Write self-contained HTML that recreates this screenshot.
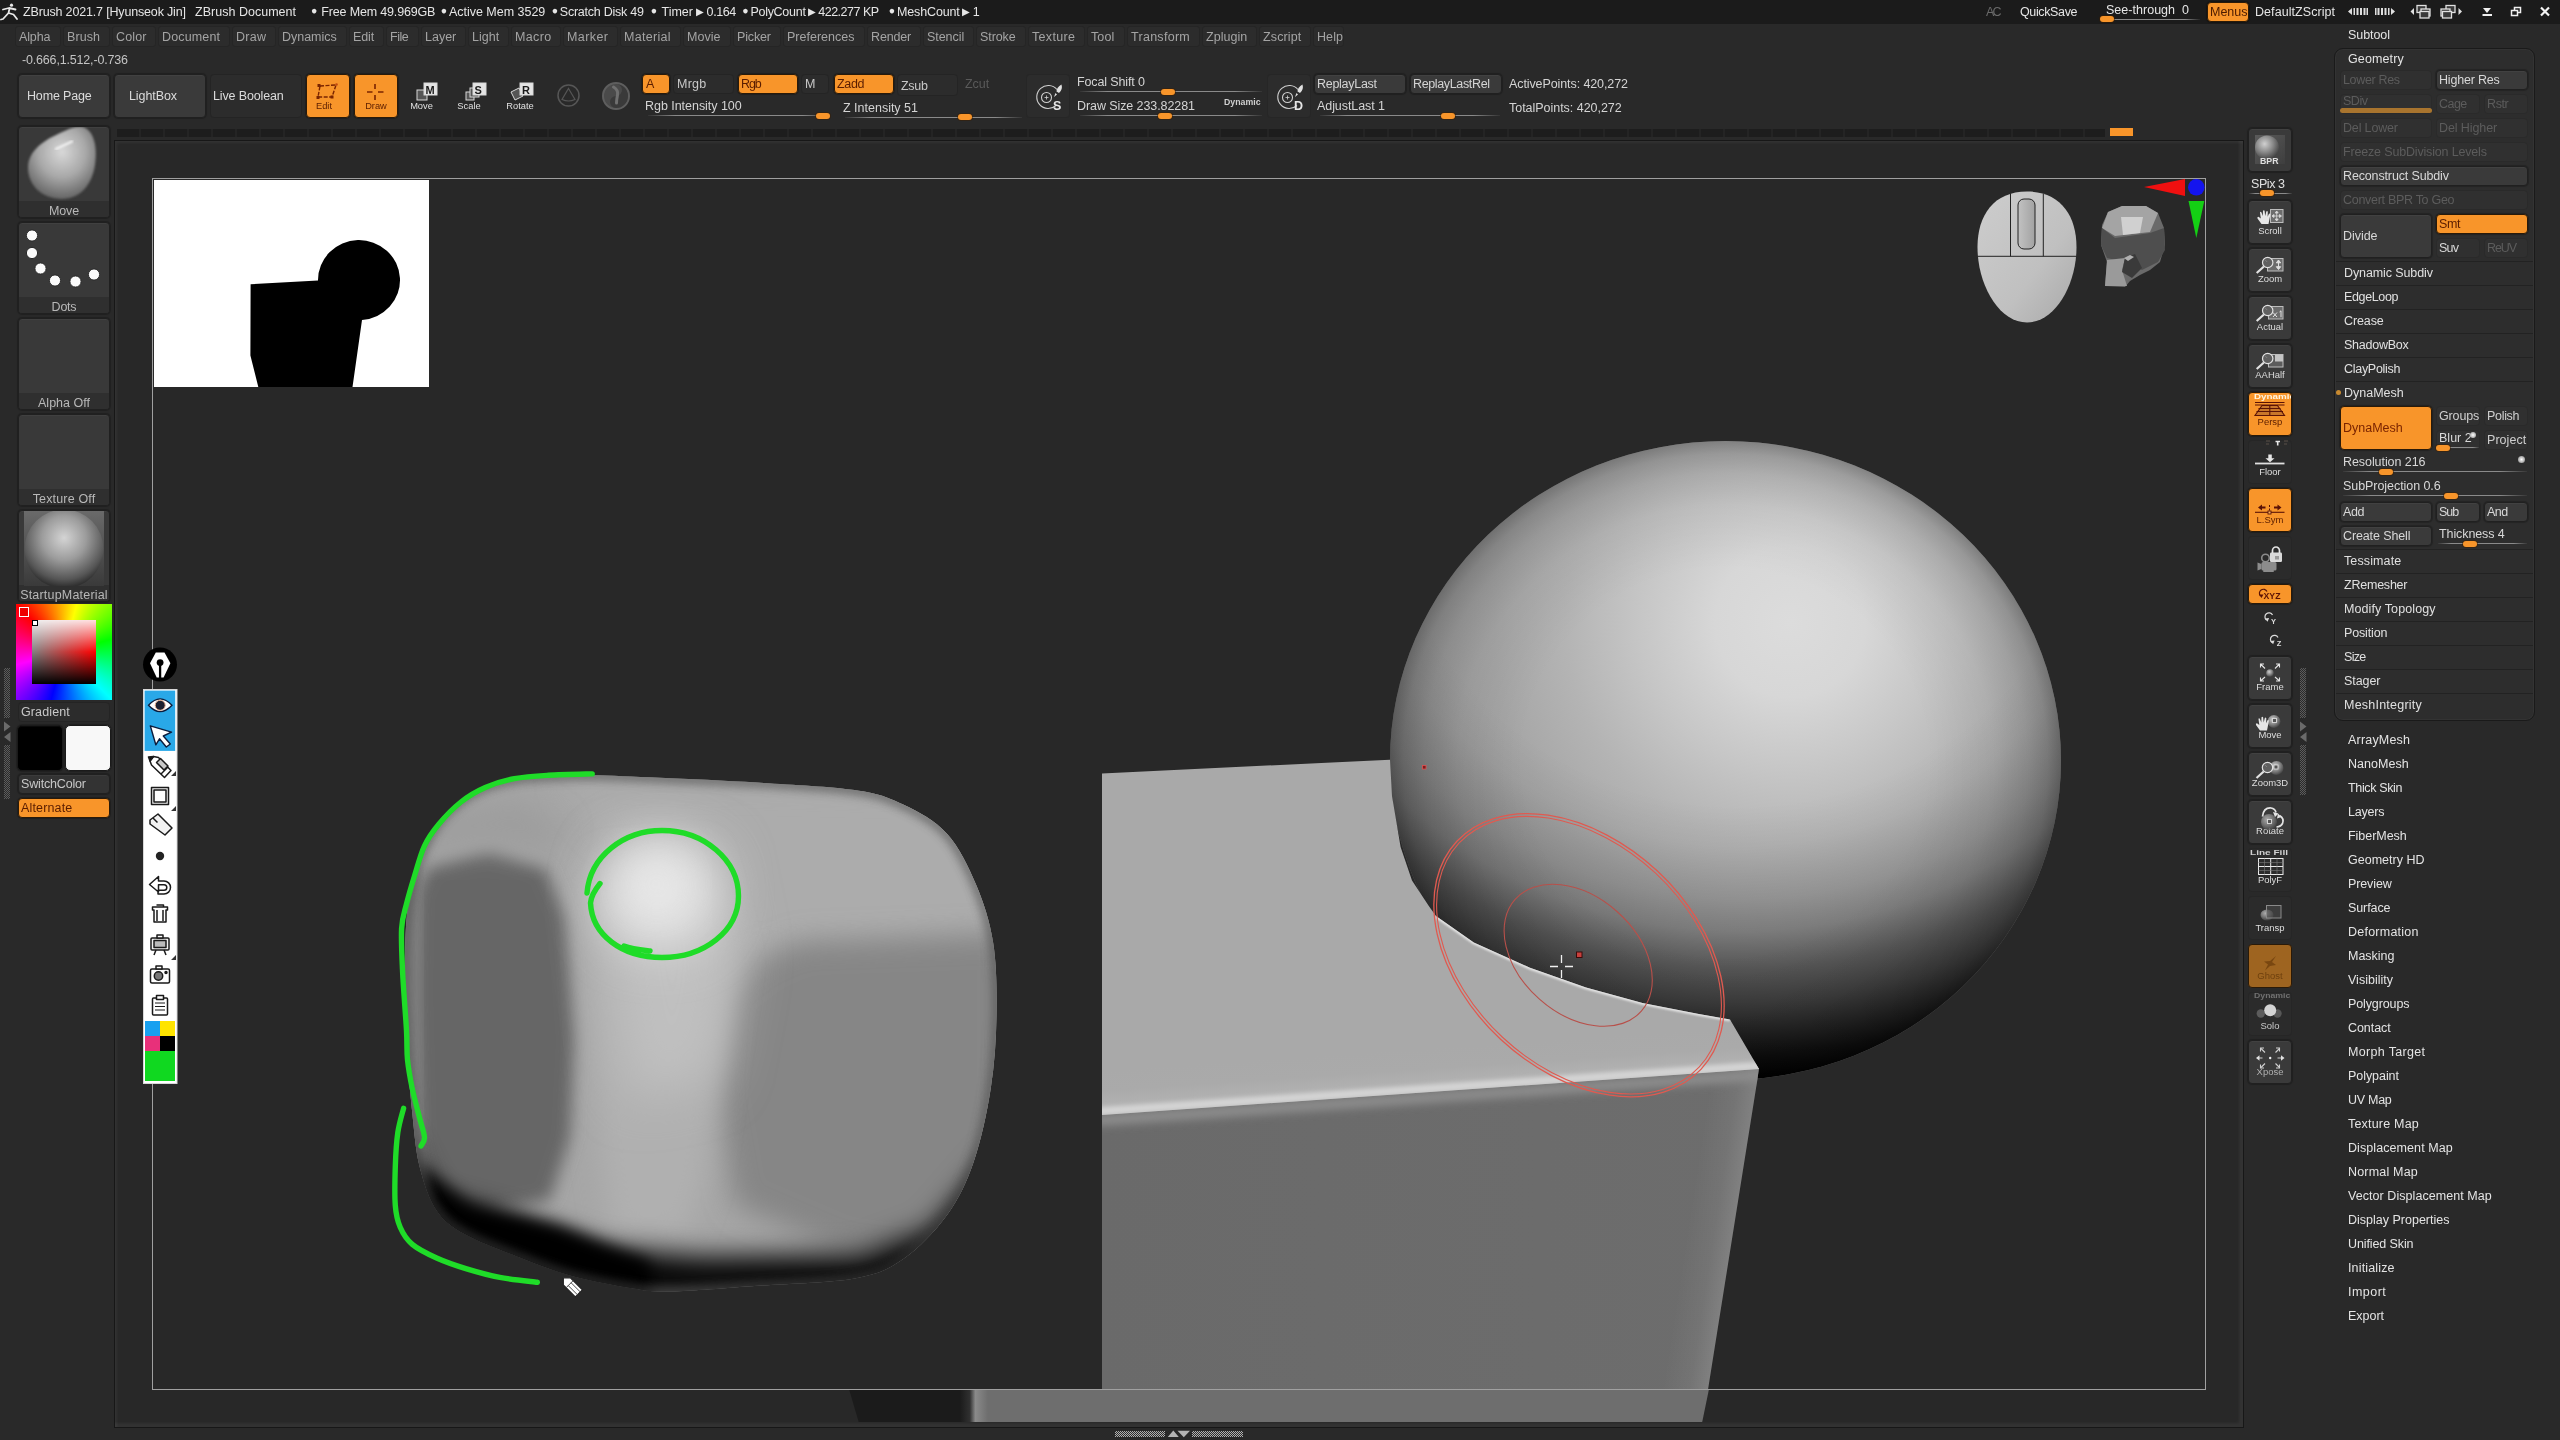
<!DOCTYPE html>
<html><head><meta charset="utf-8"><title>ZBrush</title><style>
*{box-sizing:border-box;margin:0;padding:0}
html,body{width:2560px;height:1440px;overflow:hidden;background:#292929}
body{position:relative;font-family:"Liberation Sans",sans-serif;font-size:12.5px;color:#d4d4d4}
div,svg{position:absolute}
.t{white-space:pre;line-height:16px;height:16px}
#ui{left:0;top:0;width:2560px;height:1440px;will-change:transform}
.b{background:#3a3a3a;border:1px solid #202020;border-radius:4px;box-shadow:inset 0 1px 0 rgba(255,255,255,.04),0 0 1px 1px rgba(0,0,0,.22)}
.bd{background:#2c2c2c;border:1px solid #242424;border-radius:4px}
.bo{background:#f8952a;border:1px solid #2a1a08;border-radius:4px;box-shadow:0 0 1px 1px rgba(0,0,0,.25)}
.bg{background:#9e6420;border:1px solid #2a1a08;border-radius:4px}
.bx{background:#303030;border:1px solid #2a2a2a;border-radius:4px}
.dot{font-size:8px;position:relative;top:-1px}
.tri{font-size:8.5px;position:relative;top:-1px;letter-spacing:0}
.mi{background:#2c2c2c;border:1px solid #252525;border-radius:3px}
.trk{height:1px;background:linear-gradient(90deg,rgba(150,150,150,.1),#8a8a8a 15%,#8a8a8a 85%,rgba(150,150,150,.1))}
.thumb{height:6px;background:#f8952a;border-radius:3px;box-shadow:0 0 0 1px rgba(60,30,0,.5)}
.sep{height:1px;background:#222;left:2336px;width:197px}
</style></head><body>
<div style="left:114px;top:140px;width:2130px;height:1288px;background:#282828;border:1px solid #171717;box-shadow:inset 2px 2px 3px rgba(255,255,255,.05),inset -4px -4px 3px rgba(255,255,255,.05)"></div>
<svg style="left:0;top:0" width="2560" height="1440" viewBox="0 0 2560 1440">
<defs>
<radialGradient id="sp1" gradientUnits="userSpaceOnUse" cx="1790" cy="622" r="500">
<stop offset="0" stop-color="#dcdcdc"/><stop offset="0.15" stop-color="#d7d7d7"/><stop offset="0.3" stop-color="#c6c6c6"/><stop offset="0.45" stop-color="#b4b4b4"/><stop offset="0.6" stop-color="#a6a6a6"/><stop offset="0.8" stop-color="#989898"/><stop offset="1" stop-color="#8e8e8e"/></radialGradient>
<radialGradient id="sp2" gradientUnits="userSpaceOnUse" cx="1739.5" cy="472" r="636.1" gradientTransform="translate(0 22.51) scale(1 .9523)">
<stop offset="0.55" stop-color="#000" stop-opacity="0"/><stop offset="0.6176" stop-color="#000" stop-opacity=".04"/><stop offset="0.7057" stop-color="#000" stop-opacity=".15"/><stop offset="0.758" stop-color="#000" stop-opacity=".25"/><stop offset="0.8217" stop-color="#000" stop-opacity=".47"/><stop offset="0.8766" stop-color="#000" stop-opacity=".62"/><stop offset="0.9072" stop-color="#000" stop-opacity=".72"/><stop offset="0.9604" stop-color="#000" stop-opacity=".9"/><stop offset="1" stop-color="#000" stop-opacity="1"/></radialGradient>
<radialGradient id="sp3" gradientUnits="userSpaceOnUse" cx="1725.5" cy="760.5" r="335.5" gradientTransform="translate(0 36.2) scale(1 .9523)">
<stop offset="0.6" stop-color="#000" stop-opacity="0"/><stop offset="0.8" stop-color="#000" stop-opacity=".05"/><stop offset="0.9" stop-color="#000" stop-opacity=".12"/><stop offset="0.96" stop-color="#000" stop-opacity=".2"/><stop offset="1" stop-color="#000" stop-opacity=".32"/></radialGradient>
<linearGradient id="bxtop" gradientUnits="userSpaceOnUse" x1="1427.3" y1="1048.6" x2="1430" y2="1088.5"><stop offset="0" stop-color="#a9a9a9"/><stop offset="0.5" stop-color="#aaa"/><stop offset="1" stop-color="#b4b4b4"/></linearGradient>
<linearGradient id="bxfr" gradientUnits="userSpaceOnUse" x1="1102" y1="0" x2="1760" y2="0"><stop offset="0" stop-color="#6a6a6a"/><stop offset="1" stop-color="#6d6d6d"/></linearGradient>
<linearGradient id="bxed" gradientUnits="userSpaceOnUse" x1="1685.5" y1="1238.1" x2="1730" y2="1245"><stop offset="0" stop-color="#fff" stop-opacity="0"/><stop offset="0.6" stop-color="#fff" stop-opacity=".05"/><stop offset="1" stop-color="#fff" stop-opacity=".13"/></linearGradient>
<linearGradient id="bxfr2" gradientUnits="userSpaceOnUse" x1="0" y1="1060" x2="0" y2="1400"><stop offset="0" stop-color="#fff" stop-opacity=".06"/><stop offset="1" stop-color="#000" stop-opacity=".05"/></linearGradient>
<filter id="e2" filterUnits="userSpaceOnUse" x="1050" y="880" width="760" height="280"><feGaussianBlur stdDeviation="2"/></filter>
<filter id="e4" filterUnits="userSpaceOnUse" x="1050" y="1020" width="760" height="160"><feGaussianBlur stdDeviation="4"/></filter>
<filter id="e1" filterUnits="userSpaceOnUse" x="1050" y="880" width="760" height="280"><feGaussianBlur stdDeviation="1.1"/></filter>
<filter id="b2" x="-10%" y="-10%" width="120%" height="120%"><feGaussianBlur stdDeviation="2"/></filter>
<filter id="b4" x="-10%" y="-10%" width="120%" height="120%"><feGaussianBlur stdDeviation="4"/></filter>
<filter id="b8" x="-20%" y="-20%" width="140%" height="140%"><feGaussianBlur stdDeviation="8"/></filter>
<filter id="b14" x="-30%" y="-30%" width="160%" height="160%"><feGaussianBlur stdDeviation="14"/></filter>
<filter id="b25" x="-50%" y="-50%" width="200%" height="200%"><feGaussianBlur stdDeviation="25"/></filter>
<clipPath id="cblob"><path d="M592 775.3C573.3 775.1 561 775.8 548 776.5C535 777.2 525.3 777.4 514 779.5C502.7 781.6 491.7 783.5 480.4 789C469.1 794.5 455.7 803.3 446.4 812.8C437.1 822.3 430.6 832.2 424.5 845.8C418.4 859.4 413.1 876.6 409.9 894.4C406.6 912.2 405.6 928.4 405 952.7C404.4 977 405.3 1013.3 406.5 1040C407.7 1066.7 410.1 1091.9 412.3 1113C414.5 1134.1 415.6 1150.4 419.6 1166.6C423.7 1182.8 428.9 1199 436.6 1210.3C444.3 1221.6 451.2 1226.5 465.8 1234.6C480.4 1242.7 506.3 1252.1 524.1 1259C541.9 1265.9 554.9 1271.2 572.7 1276C590.5 1280.8 614.8 1285.4 631 1288C647.2 1290.6 648.9 1291.9 670 1291.5C691.1 1291.1 726.6 1287.9 757.4 1285.7C788.2 1283.5 830.3 1282.9 854.6 1278.4C878.9 1274 887.8 1269.6 903.2 1259C918.6 1248.4 935.2 1231.2 947 1215C958.8 1198.8 966.4 1182.7 973.7 1161.7C981 1140.7 986.9 1113.1 990.7 1088.8C994.5 1064.5 996.1 1040.3 996.5 1016C996.9 991.7 996.6 964.9 993.2 943C989.8 921.1 983.8 902.9 976.1 884.7C968.4 866.5 959.1 847.1 947 833.7C934.9 820.3 918.6 811.8 903.2 804.5C887.8 797.2 878.9 793.6 854.6 790C830.3 786.4 789.8 784.6 757.4 782.6C725 780.6 687.8 779 660.2 777.8C632.6 776.6 610.7 775.5 592 775.3Z"/></clipPath>
<clipPath id="cov"><rect x="153" y="179" width="2052" height="1210"/></clipPath>
<clipPath id="cund"><rect x="116" y="1390" width="2126" height="32"/></clipPath>
<clipPath id="ctop"><path d="M1102 773.5 L1390 759.7 L1392 796 L1400.6 847 L1412 880.6 L1428.8 906 L1436 916 L1473.8 942.5 L1530 967.8 L1586 987.5 L1642.5 1003 L1698.8 1014 L1730 1019.5 L1759 1069 L1102 1115Z"/></clipPath>
</defs>
<g clip-path="url(#cund)"><path d="M849 1389 L859 1423 L980 1423 L980 1389Z" fill="#1b1b1b"/><path d="M972 1389 H1709 L1702 1423 H972Z" fill="#6e6e6e"/><rect x="960" y="1389" width="28" height="34" fill="url(#edgeg)"/></g>
<defs><linearGradient id="edgeg" x1="0" x2="1"><stop offset="0" stop-color="#1b1b1b"/><stop offset="0.35" stop-color="#303030"/><stop offset="0.55" stop-color="#8a8a8a"/><stop offset="1" stop-color="#6e6e6e"/></linearGradient></defs>
<g clip-path="url(#cov)">
<ellipse cx="1725.5" cy="760.5" rx="335.5" ry="319.5" fill="url(#sp1)"/>
<ellipse cx="1725.5" cy="760.5" rx="335.5" ry="319.5" fill="url(#sp2)"/>
<ellipse cx="1725.5" cy="760.5" rx="335.5" ry="319.5" fill="url(#sp3)"/>
<path d="M1102 1113 L1759 1068 L1757 1082 L1703 1421 L1703 1440 L1102 1440Z" fill="url(#bxfr)"/>
<clipPath id="cfr"><path d="M1102 1113 L1759 1068 L1757 1082 L1703 1421 L1703 1440 L1102 1440Z"/></clipPath><g clip-path="url(#cfr)"><rect x="1600" y="1060" width="170" height="380" fill="url(#bxed)"/><path d="M1095 1120.5 L1765 1074.5" stroke="#8e8e8e" stroke-width="11" filter="url(#e4)" fill="none"/></g>
<g clip-path="url(#ctop)"><rect x="1100" y="750" width="670" height="370" fill="url(#bxtop)"/>
<path d="M1095 1111.5 L1765 1065.5" stroke="#d4d4d4" stroke-width="8" filter="url(#e2)" fill="none"/>
<path d="M1436 916 L1473.8 942.5 L1530 967.8 L1586 987.5 L1642.5 1003 L1698.8 1014 L1730 1019.5" stroke="#ececec" stroke-width="3.5" fill="none" filter="url(#e1)" opacity=".95"/>
</g>
<path d="M592 775.3C573.3 775.1 561 775.8 548 776.5C535 777.2 525.3 777.4 514 779.5C502.7 781.6 491.7 783.5 480.4 789C469.1 794.5 455.7 803.3 446.4 812.8C437.1 822.3 430.6 832.2 424.5 845.8C418.4 859.4 413.1 876.6 409.9 894.4C406.6 912.2 405.6 928.4 405 952.7C404.4 977 405.3 1013.3 406.5 1040C407.7 1066.7 410.1 1091.9 412.3 1113C414.5 1134.1 415.6 1150.4 419.6 1166.6C423.7 1182.8 428.9 1199 436.6 1210.3C444.3 1221.6 451.2 1226.5 465.8 1234.6C480.4 1242.7 506.3 1252.1 524.1 1259C541.9 1265.9 554.9 1271.2 572.7 1276C590.5 1280.8 614.8 1285.4 631 1288C647.2 1290.6 648.9 1291.9 670 1291.5C691.1 1291.1 726.6 1287.9 757.4 1285.7C788.2 1283.5 830.3 1282.9 854.6 1278.4C878.9 1274 887.8 1269.6 903.2 1259C918.6 1248.4 935.2 1231.2 947 1215C958.8 1198.8 966.4 1182.7 973.7 1161.7C981 1140.7 986.9 1113.1 990.7 1088.8C994.5 1064.5 996.1 1040.3 996.5 1016C996.9 991.7 996.6 964.9 993.2 943C989.8 921.1 983.8 902.9 976.1 884.7C968.4 866.5 959.1 847.1 947 833.7C934.9 820.3 918.6 811.8 903.2 804.5C887.8 797.2 878.9 793.6 854.6 790C830.3 786.4 789.8 784.6 757.4 782.6C725 780.6 687.8 779 660.2 777.8C632.6 776.6 610.7 775.5 592 775.3Z" fill="#a6a6a6"/>
<g clip-path="url(#cblob)">
<path d="M560 780 L990 790 L1000 935 L730 955 L700 900 L600 830Z" fill="#acacac" filter="url(#b14)"/>
<path d="M722 990 L760 960 L800 942 L1010 935 L1010 1200 L920 1260 L840 1250 L735 1205 L715 1090Z" fill="#868686" filter="url(#b14)"/>
<path d="M428 866 L490 850 L545 868 L566 918 L575 1040 L570 1137 L550 1200 L466 1215 L432 1190 L418 1140 L414 990 L416 894Z" fill="#666" filter="url(#b8)"/>
<path d="M400 880 L420 870 L420 1180 L400 1180Z" fill="#7c7c7c" filter="url(#b8)"/>
<path d="M420 815 L520 795 L565 828 L548 856 L480 845 L415 860Z" fill="#9e9e9e" filter="url(#b14)"/>
<path d="M590 900 L602 860 L705 850 L735 960 L718 1080 L705 1180 L685 1235 L612 1235 L600 1150 L594 1040Z" fill="#b0b0b0" filter="url(#b14)"/>
<path d="M598 900 L615 850 L715 850 L738 960 L715 1080 L630 1100Z" fill="#c0c0c0" filter="url(#b25)"/>
<ellipse cx="660" cy="892" rx="58" ry="56" fill="#e4e4e4" filter="url(#b25)"/>
<ellipse cx="656" cy="884" rx="28" ry="28" fill="#eee" filter="url(#b25)" opacity=".6"/>
<path d="M400 1128 L436 1198 L520 1220 L600 1248 L700 1257 L860 1255 L930 1230 L1000 1150 L1010 1300 L400 1300Z" fill="#000" filter="url(#b14)"/>
<path d="M420 1165 L470 1204 L560 1226 L650 1262 L650 1300 L420 1300Z" fill="#000" filter="url(#b8)"/>
<path d="M592 775.3C573.3 775.1 561 775.8 548 776.5C535 777.2 525.3 777.4 514 779.5C502.7 781.6 491.7 783.5 480.4 789C469.1 794.5 455.7 803.3 446.4 812.8C437.1 822.3 430.6 832.2 424.5 845.8C418.4 859.4 413.1 876.6 409.9 894.4C406.6 912.2 405.6 928.4 405 952.7C404.4 977 405.3 1013.3 406.5 1040C407.7 1066.7 410.1 1091.9 412.3 1113C414.5 1134.1 415.6 1150.4 419.6 1166.6C423.7 1182.8 428.9 1199 436.6 1210.3C444.3 1221.6 451.2 1226.5 465.8 1234.6C480.4 1242.7 506.3 1252.1 524.1 1259C541.9 1265.9 554.9 1271.2 572.7 1276C590.5 1280.8 614.8 1285.4 631 1288C647.2 1290.6 648.9 1291.9 670 1291.5C691.1 1291.1 726.6 1287.9 757.4 1285.7C788.2 1283.5 830.3 1282.9 854.6 1278.4C878.9 1274 887.8 1269.6 903.2 1259C918.6 1248.4 935.2 1231.2 947 1215C958.8 1198.8 966.4 1182.7 973.7 1161.7C981 1140.7 986.9 1113.1 990.7 1088.8C994.5 1064.5 996.1 1040.3 996.5 1016C996.9 991.7 996.6 964.9 993.2 943C989.8 921.1 983.8 902.9 976.1 884.7C968.4 866.5 959.1 847.1 947 833.7C934.9 820.3 918.6 811.8 903.2 804.5C887.8 797.2 878.9 793.6 854.6 790C830.3 786.4 789.8 784.6 757.4 782.6C725 780.6 687.8 779 660.2 777.8C632.6 776.6 610.7 775.5 592 775.3Z" fill="none" stroke="#444" stroke-width="10" filter="url(#b4)" opacity=".55"/>
</g>
<g fill="none" stroke="#1fdc28" stroke-width="5.4" stroke-linecap="round" stroke-linejoin="round"><path d="M592.2 773.9C584.9 774.1 561.4 774.5 548.4 775.3C535.4 776.1 524.9 776.7 514.4 778.7C503.9 780.7 494.2 783.6 485.3 787.5C476.4 791.4 468.7 795.9 461 802C453.3 808.1 445.1 816.7 439 824C432.9 831.3 428.5 837.3 424.5 845.8C420.5 854.3 417.8 865.3 414.8 875C411.8 884.7 408.7 895.1 406.5 904C404.3 912.9 402.2 917 401.6 928.4C401 939.8 401.8 955.2 402.6 972.2C403.4 989.2 405.7 1015.9 406.5 1030.5C407.3 1045.1 406.5 1050 407.5 1059.7C408.5 1069.4 410.3 1079.1 412.3 1088.8C414.3 1098.5 417.6 1109.9 419.6 1118C421.6 1126.1 424.3 1132.7 424.5 1137.4C424.7 1142.1 421.6 1144.6 421 1146"/><path d="M403.6 1108.3C402.6 1112.3 399.2 1122.9 397.8 1132.6C396.4 1142.3 395.7 1154.4 395.3 1166.6C394.9 1178.8 394.5 1195.4 395.3 1205.5C396.1 1215.6 397.4 1220.8 400.2 1227.3C403 1233.8 406.2 1239.3 412.3 1244.4C418.4 1249.5 427.7 1254 436.6 1258C445.5 1262 455.3 1265.4 465.8 1268.6C476.3 1271.8 487.9 1275.1 499.8 1277.4C511.7 1279.7 531 1281.5 537.3 1282.3"/>
<path d="M600 883.5 C594 891 591 897 590.5 903 C592 935 622 957.5 662 957.5 C704 957.5 738.5 931 738.5 896 C738.5 860 704 830.5 662 830.5 C624 830.5 590 856 587 893 M624 946 C632 949 642 950 650 951"/></g>
<g transform="translate(572.5 1287) rotate(-45)"><path d="M-5 -8 L0 -13 L5 -8 L5 9 L-5 9Z" fill="#fff" stroke="#222" stroke-width="1.2"/><path d="M-5 -4h10M-2 -4v13M2 -4v13" stroke="#444" stroke-width=".9" fill="none"/></g>
<g fill="none" transform="translate(1579 955.2) rotate(43)"><ellipse rx="167" ry="115" stroke="#e05a50" stroke-width="1.3"/><ellipse rx="164.2" ry="112.2" stroke="#e05a50" stroke-width="1.1"/></g>
<g fill="none" transform="translate(1578.2 955.3) rotate(41.5)"><ellipse rx="84.3" ry="58.5" stroke="#b8504a" stroke-width="1.1"/></g>
<rect x="1576.5" y="952" width="5.5" height="5.5" fill="#c8403c" stroke="#3a0a0a" stroke-width="1"/>
<rect x="1422.5" y="765.5" width="3.5" height="3.5" fill="#7a2020" stroke="#e05050" stroke-width=".8"/>
<path d="M1561.5 955v8M1561.5 970v8M1550 966.5h8M1565 966.5h8" stroke="#f0f0f0" stroke-width="1.3"/>
<rect x="154" y="180" width="275" height="207" fill="#fff"/>
<path d="M250.6 284.2 L318 280.4 A41 40 0 1 1 362 320 L352.5 387 L258.3 387 L250.4 355.4Z" fill="#000"/>
<defs><linearGradient id="mo" x1="0" y1="0" x2="1" y2="1"><stop offset="0" stop-color="#cdcdcd"/><stop offset="0.6" stop-color="#c0c0c0"/><stop offset="1" stop-color="#a8a8a8"/></linearGradient><linearGradient id="wh" x1="0" x2="1"><stop offset="0" stop-color="#c2c2c2"/><stop offset="1" stop-color="#a2a2a2"/></linearGradient></defs>
<path d="M2027 191.5 C2060 191.5 2076.5 215 2076.5 247 C2076.5 285 2055 322.5 2027 322.5 C1999 322.5 1977.5 285 1977.5 247 C1977.5 215 1994 191.5 2027 191.5Z" fill="url(#mo)"/>
<path d="M1978 256.3H2076M2010.5 193.5V256.3M2043.3 193.5V256.3" stroke="#222" stroke-width="1" fill="none"/>
<rect x="2018" y="199" width="17" height="50" rx="6" fill="url(#wh)" stroke="#222" stroke-width="1"/>
<g><path d="M2102 225 L2108 212 L2122 206 L2146 206 L2158 213 L2164 228 L2165 245 L2160 262 L2150 270 L2140 275 L2130 281 L2125 287 L2105 286 L2107 262 L2101 245Z" fill="#6a6a6a"/>
<path d="M2108 212 L2122 206 L2146 206 L2158 213 L2150 232 L2115 236 L2102 228Z" fill="#a4a4a4"/><path d="M2121 217 L2143 217 L2140 233 L2123 235Z" fill="#d0d0d0"/>
<path d="M2102 228 L2115 238 L2150 233 L2164 228 L2165 250 L2158 262 L2142 270 L2125 262 L2107 258 L2101 245Z" fill="#4e4e4e"/>
<path d="M2107 260 L2125 258 L2122 270 L2127 286 L2105 286Z" fill="#9a9a9a"/><path d="M2125 258 L2135 254 L2142 268 L2132 278 L2122 272Z" fill="#3a3a3a"/><path d="M2124 258 l6 -3 4 2 -6 4z" fill="#b0b0b0"/></g>
<path d="M2144 187 L2185 179 L2185 196Z" fill="#f01010"/><circle cx="2196.3" cy="187.3" r="8.3" fill="#1414ee"/><path d="M2188.5 201 L2204.3 201 L2196.3 238Z" fill="#14d014"/>
</g>
<rect x="152.5" y="178.5" width="2053" height="1211" fill="none" stroke="#a0a0a0" stroke-width="1"/>
</svg>
<div style="left:1115px;top:1431px;width:50px;height:6px;background:conic-gradient(#b0b0b0 25%,#2c2c2c 0 50%,#b0b0b0 0 75%,#2c2c2c 0) 0 0/2px 2px"></div>
<div style="left:1192px;top:1431px;width:51px;height:6px;background:conic-gradient(#b0b0b0 25%,#2c2c2c 0 50%,#b0b0b0 0 75%,#2c2c2c 0) 0 0/2px 2px"></div>
<svg style="left:1166px;top:1429px" width="26" height="10"><path d="M1.8 8l5.5-6.5 5.5 6.5zM11.5 1.8h12.5l-6.2 6.5z" fill="#b4b4b4"/></svg>
<div id="ui"><div style="left:0;top:0;width:2560px;height:24px;background:#1b1b1b"></div>
<svg style="left:0;top:2px" width="20" height="20" viewBox="0 0 20 20"><g fill="none" stroke="#e8e8e8" stroke-width="1.8" stroke-linecap="round" stroke-linejoin="round"><circle cx="11.5" cy="3.2" r="1.6" fill="#e8e8e8" stroke="none"/><path d="M3 7.5 L9 6 L15.5 7.5 M9.5 6.5 L8.5 11 L3 17 L1 17.5 M8.5 11 L13.5 12.5 L17 17"/></g></svg>
<div class="t " style="left:23px;top:3.67px;color:#e6e6e6;letter-spacing:-0.165px;">ZBrush 2021.7 [Hyunseok Jin]</div>
<div class="t " style="left:195px;top:3.67px;color:#e6e6e6;letter-spacing:0.019px;">ZBrush Document</div>
<div class="t " style="left:321.3px;top:3.67px;color:#e6e6e6;letter-spacing:-0.164px;">Free Mem 49.969GB</div>
<div class="t " style="left:449px;top:3.67px;color:#e6e6e6;letter-spacing:-0.02px;">Active Mem 3529</div>
<div class="t " style="left:559.8px;top:3.67px;color:#e6e6e6;letter-spacing:-0.238px;">Scratch Disk 49</div>
<div class="t " style="left:661.5px;top:3.67px;color:#e6e6e6;letter-spacing:0.004px;">Timer</div>
<div class="t " style="left:706.6px;top:3.67px;color:#e6e6e6;letter-spacing:-0.42px;">0.164</div>
<div class="t " style="left:750.4px;top:3.67px;color:#e6e6e6;letter-spacing:-0.273px;">PolyCount</div>
<div class="t " style="left:818.2px;top:3.67px;color:#e6e6e6;letter-spacing:-0.483px;">422.277 KP</div>
<div class="t " style="left:897px;top:3.67px;color:#e6e6e6;letter-spacing:-0.142px;">MeshCount</div>
<div class="t " style="left:972.7px;top:3.67px;color:#e6e6e6;">1</div>
<div class="t " style="left:311.1px;top:2.46px;color:#e6e6e6;font-size:10.5px;">●</div>
<div class="t " style="left:440.8px;top:2.46px;color:#e6e6e6;font-size:10.5px;">●</div>
<div class="t " style="left:551.8px;top:2.46px;color:#e6e6e6;font-size:10.5px;">●</div>
<div class="t " style="left:650.8px;top:2.46px;color:#e6e6e6;font-size:10.5px;">●</div>
<div class="t " style="left:742.3px;top:2.46px;color:#e6e6e6;font-size:10.5px;">●</div>
<div class="t " style="left:888.8px;top:2.46px;color:#e6e6e6;font-size:10.5px;">●</div>
<div class="t " style="left:695.7px;top:3.63px;color:#e6e6e6;font-size:10px;">▶</div>
<div class="t " style="left:807.8px;top:3.63px;color:#e6e6e6;font-size:10px;">▶</div>
<div class="t " style="left:962.2px;top:3.63px;color:#e6e6e6;font-size:10px;">▶</div>
<div class="t " style="left:1986px;top:3.67px;color:#6a6a6a;letter-spacing:-1.875px;">AC</div>
<div class="t " style="left:2020px;top:3.67px;color:#e6e6e6;letter-spacing:-0.369px;">QuickSave</div>
<div class="t " style="left:2106px;top:1.67px;color:#e6e6e6;letter-spacing:0.023px;">See-through  0</div>
<div class="trk" style="left:2100px;top:18.5px;width:100px"></div><div class="thumb" style="left:2100px;top:16px;width:14px"></div>
<div class="bo" style="left:2207px;top:2px;width:42px;height:20px;"></div>
<div class="t " style="left:2210px;top:3.67px;color:#4a1a00;letter-spacing:-0.008px;">Menus</div>
<div class="t " style="left:2255px;top:3.67px;color:#e6e6e6;letter-spacing:0.061px;">DefaultZScript</div>
<svg style="left:2340px;top:0" width="220" height="24" viewBox="2340 0 220 24"><g fill="#e0e0e0">
<path d="M2348 11.5 l4 -3.5 v7z"/><rect x="2353.5" y="8" width="1.5" height="7"/><rect x="2356.5" y="8" width="2" height="7"/><rect x="2360" y="8" width="2" height="7"/><rect x="2363.5" y="8" width="2" height="7"/><rect x="2366.5" y="8" width="1.5" height="7"/>
<rect x="2375" y="8" width="1.5" height="7"/><rect x="2377.5" y="8" width="2" height="7"/><rect x="2381" y="8" width="2" height="7"/><rect x="2384.5" y="8" width="2" height="7"/><rect x="2388" y="8" width="1.5" height="7"/><path d="M2395 11.5 l-4 -3.5 v7z"/>
<path d="M2410.5 11.5 l3.5 -3.5 v7z"/><path d="M2462 11.5 l-3.5 -3.5 v7z"/>
</g><g fill="#3a3a3a" stroke="#e0e0e0" stroke-width="1.3">
<rect x="2417" y="5.5" width="9" height="7"/><rect x="2421" y="9" width="9" height="7"/><rect x="2420" y="11.5" width="9" height="6.5"/>
<rect x="2446" y="5.5" width="9" height="7"/><rect x="2441" y="9" width="9" height="7"/><rect x="2442.5" y="11.5" width="9" height="6.5"/>
</g><g fill="#f0f0f0"><path d="M2483 8h8l-4 5z"/><rect x="2482.5" y="14" width="9.5" height="2"/></g>
<g fill="none" stroke="#f0f0f0" stroke-width="1.5"><rect x="2514.5" y="7.5" width="6" height="5"/><rect x="2511.5" y="10.5" width="6" height="5" fill="#1b1b1b"/></g>
<path d="M2541 7.5l8 8M2549 7.5l-8 8" stroke="#f4f4f4" stroke-width="2.2"/></svg>
<div class="mi" style="left:15px;top:26px;width:46px;height:21px;"></div>
<div class="t m" style="left:19px;top:28.67px;color:#a4a4a4;letter-spacing:-0.121px;">Alpha</div>
<div class="mi" style="left:63px;top:26px;width:47px;height:21px;"></div>
<div class="t m" style="left:67px;top:28.67px;color:#a4a4a4;letter-spacing:0.086px;">Brush</div>
<div class="mi" style="left:112px;top:26px;width:44px;height:21px;"></div>
<div class="t m" style="left:116px;top:28.67px;color:#a4a4a4;letter-spacing:0.156px;">Color</div>
<div class="mi" style="left:158px;top:26px;width:72px;height:21px;"></div>
<div class="t m" style="left:162px;top:28.67px;color:#a4a4a4;letter-spacing:0.145px;">Document</div>
<div class="mi" style="left:232px;top:26px;width:44px;height:21px;"></div>
<div class="t m" style="left:236px;top:28.67px;color:#a4a4a4;letter-spacing:0.276px;">Draw</div>
<div class="mi" style="left:278px;top:26px;width:69px;height:21px;"></div>
<div class="t m" style="left:282px;top:28.67px;color:#a4a4a4;letter-spacing:-0.018px;">Dynamics</div>
<div class="mi" style="left:349px;top:26px;width:35px;height:21px;"></div>
<div class="t m" style="left:353px;top:28.67px;color:#a4a4a4;letter-spacing:-0.099px;">Edit</div>
<div class="mi" style="left:386px;top:26px;width:33px;height:21px;"></div>
<div class="t m" style="left:390px;top:28.67px;color:#a4a4a4;letter-spacing:-0.469px;">File</div>
<div class="mi" style="left:421px;top:26px;width:45px;height:21px;"></div>
<div class="t m" style="left:425px;top:28.67px;color:#a4a4a4;letter-spacing:-0.008px;">Layer</div>
<div class="mi" style="left:468px;top:26px;width:41px;height:21px;"></div>
<div class="t m" style="left:472px;top:28.67px;color:#a4a4a4;letter-spacing:0.035px;">Light</div>
<div class="mi" style="left:511px;top:26px;width:50px;height:21px;"></div>
<div class="t m" style="left:515px;top:28.67px;color:#a4a4a4;letter-spacing:0.379px;">Macro</div>
<div class="mi" style="left:563px;top:26px;width:55px;height:21px;"></div>
<div class="t m" style="left:567px;top:28.67px;color:#a4a4a4;letter-spacing:0.419px;">Marker</div>
<div class="mi" style="left:620px;top:26px;width:61px;height:21px;"></div>
<div class="t m" style="left:624px;top:28.67px;color:#a4a4a4;letter-spacing:0.29px;">Material</div>
<div class="mi" style="left:683px;top:26px;width:48px;height:21px;"></div>
<div class="t m" style="left:687px;top:28.67px;color:#a4a4a4;letter-spacing:0.039px;">Movie</div>
<div class="mi" style="left:733px;top:26px;width:48px;height:21px;"></div>
<div class="t m" style="left:737px;top:28.67px;color:#a4a4a4;letter-spacing:-0.147px;">Picker</div>
<div class="mi" style="left:783px;top:26px;width:82px;height:21px;"></div>
<div class="t m" style="left:787px;top:28.67px;color:#a4a4a4;letter-spacing:0.009px;">Preferences</div>
<div class="mi" style="left:867px;top:26px;width:54px;height:21px;"></div>
<div class="t m" style="left:871px;top:28.67px;color:#a4a4a4;letter-spacing:-0.15px;">Render</div>
<div class="mi" style="left:923px;top:26px;width:51px;height:21px;"></div>
<div class="t m" style="left:927px;top:28.67px;color:#a4a4a4;letter-spacing:-0.047px;">Stencil</div>
<div class="mi" style="left:976px;top:26px;width:50px;height:21px;"></div>
<div class="t m" style="left:980px;top:28.67px;color:#a4a4a4;letter-spacing:-0.078px;">Stroke</div>
<div class="mi" style="left:1028px;top:26px;width:57px;height:21px;"></div>
<div class="t m" style="left:1032px;top:28.67px;color:#a4a4a4;letter-spacing:0.333px;">Texture</div>
<div class="mi" style="left:1087px;top:26px;width:38px;height:21px;"></div>
<div class="t m" style="left:1091px;top:28.67px;color:#a4a4a4;letter-spacing:0.104px;">Tool</div>
<div class="mi" style="left:1127px;top:26px;width:73px;height:21px;"></div>
<div class="t m" style="left:1131px;top:28.67px;color:#a4a4a4;letter-spacing:0.281px;">Transform</div>
<div class="mi" style="left:1202px;top:26px;width:55px;height:21px;"></div>
<div class="t m" style="left:1206px;top:28.67px;color:#a4a4a4;letter-spacing:0.042px;">Zplugin</div>
<div class="mi" style="left:1259px;top:26px;width:52px;height:21px;"></div>
<div class="t m" style="left:1263px;top:28.67px;color:#a4a4a4;letter-spacing:0.125px;">Zscript</div>
<div class="mi" style="left:1313px;top:26px;width:31px;height:21px;"></div>
<div class="t m" style="left:1317px;top:28.67px;color:#a4a4a4;letter-spacing:0.094px;">Help</div>
<div class="t " style="left:22px;top:51.67px;color:#c4c4c4;letter-spacing:-0.174px;">-0.666,1.512,-0.736</div>
<div class="b" style="left:18px;top:74px;width:92px;height:44px;"></div>
<div class="t " style="left:27px;top:87.67px;color:#dcdcdc;letter-spacing:-0.158px;">Home Page</div>
<div class="b" style="left:114px;top:74px;width:92px;height:44px;"></div>
<div class="t " style="left:129px;top:87.67px;color:#dcdcdc;letter-spacing:-0.094px;">LightBox</div>
<div class="bd" style="left:210px;top:74px;width:92px;height:44px;"></div>
<div class="t " style="left:213px;top:87.67px;color:#dcdcdc;letter-spacing:-0.139px;">Live Boolean</div>
<div class="bo" style="left:306px;top:74px;width:44px;height:44px;"></div>
<div class="t" style="left:302px;width:44px;text-align:center;top:97.68px;color:#5a1d00;font-size:9.3px;">Edit</div>
<div class="bo" style="left:354px;top:74px;width:44px;height:44px;"></div>
<div class="t" style="left:354px;width:44px;text-align:center;top:97.68px;color:#5a1d00;font-size:9.3px;">Draw</div>
<div class="t" style="left:399.5px;width:44px;text-align:center;top:97.68px;color:#e0e0e0;font-size:9.3px;">Move</div>
<div class="t" style="left:447px;width:44px;text-align:center;top:97.68px;color:#e0e0e0;font-size:9.3px;">Scale</div>
<div class="t" style="left:498px;width:44px;text-align:center;top:97.68px;color:#e0e0e0;font-size:9.3px;">Rotate</div>
<svg style="left:300px;top:74px" width="350" height="44" viewBox="300 74 350 44">
<g fill="none" stroke="#7a2400" stroke-width="1.4"><path d="M320 86 L336 85 L332 97 L318 97 Z" stroke-dasharray="4 1.5"/></g>
<g fill="#7a2400"><rect x="317.5" y="84" width="3" height="3"/><rect x="316.5" y="96" width="3" height="3"/><rect x="330.5" y="95.5" width="3" height="3"/><circle cx="336.5" cy="84.5" r="1.3" fill="#c04a10"/></g>
<g stroke="#7a2400" stroke-width="1.6"><path d="M375 84v5M375 95v5M367 92h5.5M378 92h5.5"/></g>
<g fill="#555" stroke="#d8d8d8" stroke-width="1"><rect x="417" y="90" width="10" height="10"/><rect x="424" y="83" width="13" height="12" fill="#e4e4e4"/></g>
<g fill="#555" stroke="#d8d8d8" stroke-width="1"><rect x="466" y="92" width="8" height="8"/><rect x="470" y="88" width="9" height="9"/><rect x="473" y="83" width="13" height="12" fill="#e4e4e4"/></g>
<g fill="#555" stroke="#d8d8d8" stroke-width="1"><path d="M511 92l8-4 4 8-8 4z"/><rect x="520" y="83" width="13" height="12" fill="#e4e4e4"/></g>
<g font-family="Liberation Sans" font-weight="bold" font-size="11" fill="#1a1a1a"><text x="425.6" y="94">M</text><text x="474.4" y="94">S</text><text x="522" y="94">R</text></g>
<g fill="none" stroke="#565656" stroke-width="1.5"><circle cx="568.5" cy="95.5" r="10.5"/><path d="M568.5 88.5 L575 99.5 Q568.5 102.5 562 99.5Z" stroke-width="1.2"/></g>
<circle cx="616" cy="96" r="13" fill="#4a4a4a" stroke="#5e5e5e" stroke-width="2"/><path d="M616 84 a6 6 0 0 1 0 12 a6 6 0 0 0 0 12 a12 12 0 0 0 0 -24z" fill="#3a3a3a"/><path d="M613.5 87q5 3 4 8t-1 8" fill="none" stroke="#707070" stroke-width="3" stroke-linecap="round"/>
</svg>
<div class="bo" style="left:642px;top:74px;width:28px;height:20px;"></div>
<div class="t " style="left:646px;top:75.67px;color:#5a1d00;">A</div>
<div class="bd" style="left:673px;top:74px;width:61px;height:20px;"></div>
<div class="t " style="left:677px;top:75.67px;color:#c8c8c8;letter-spacing:0.255px;">Mrgb</div>
<div class="bo" style="left:738px;top:74px;width:60px;height:20px;"></div>
<div class="t " style="left:741px;top:75.67px;color:#5a1d00;letter-spacing:-1.094px;">Rgb</div>
<div class="bd" style="left:801px;top:74px;width:28px;height:20px;"></div>
<div class="t " style="left:805px;top:75.67px;color:#c8c8c8;">M</div>
<div class="bo" style="left:834px;top:74px;width:60px;height:20px;"></div>
<div class="t " style="left:837px;top:75.67px;color:#5a1d00;letter-spacing:-0.333px;">Zadd</div>
<div class="bd" style="left:897px;top:74px;width:61px;height:22px;"></div>
<div class="t " style="left:901px;top:77.67px;color:#c8c8c8;letter-spacing:-0.266px;">Zsub</div>
<div class="t " style="left:965px;top:75.67px;color:#5a5a5a;letter-spacing:-0.021px;">Zcut</div>
<div class="t " style="left:645px;top:97.67px;color:#d4d4d4;letter-spacing:-0.034px;">Rgb Intensity 100</div>
<div class="trk" style="left:648px;top:115px;width:182px"></div><div class="thumb" style="left:816px;top:112.5px;width:14px"></div>
<div class="t " style="left:843px;top:99.67px;color:#d4d4d4;letter-spacing:-0.004px;">Z Intensity 51</div>
<div class="trk" style="left:845px;top:116.5px;width:177px"></div><div class="thumb" style="left:958px;top:114px;width:14px"></div>
<div class="bd" style="left:1026px;top:74px;width:44px;height:44px;border-color:#262626"></div>
<div class="t " style="left:1077px;top:73.67px;color:#d4d4d4;letter-spacing:-0.124px;">Focal Shift 0</div>
<div class="trk" style="left:1080px;top:91px;width:182px"></div><div class="thumb" style="left:1161px;top:88.5px;width:14px"></div>
<div class="t " style="left:1077px;top:97.67px;color:#d4d4d4;letter-spacing:-0.085px;">Draw Size 233.82281</div>
<div class="trk" style="left:1080px;top:115px;width:182px"></div><div class="thumb" style="left:1158px;top:112.5px;width:14px"></div>
<div class="t" style="left:1223.7px;top:94.02px;color:#d0d0d0;font-size:8.6px;font-weight:bold;transform-origin:0 50%;transform:scaleX(1.0188);">Dynamic</div>
<div class="bd" style="left:1267px;top:74px;width:44px;height:44px;border-color:#262626"></div>
<svg style="left:1026px;top:74px" width="44" height="44" viewBox="0 0 44 44"><g fill="none" stroke="#cfcfcf" stroke-width="1.1"><path d="M30 31.5 A11.5 11.5 0 1 1 31 15.5"/><circle cx="20.5" cy="23.5" r="5"/><path d="M18.5 23.5h4M20.5 21.5v4" stroke-width=".8"/></g><path d="M30.5 17.5 q0-4 5-7 q1.5 5-2.5 8.5z M29.5 19 l-1.5 4 3-2.5z" fill="#e0e0e0"/><text x="27" y="35.5" font-family="Liberation Sans" font-weight="bold" font-size="12.5" fill="#e6e6e6">S</text></svg>
<svg style="left:1267px;top:74px" width="44" height="44" viewBox="0 0 44 44"><g fill="none" stroke="#cfcfcf" stroke-width="1.1"><path d="M30 31.5 A11.5 11.5 0 1 1 31 15.5"/><circle cx="20.5" cy="23.5" r="5"/><path d="M18.5 23.5h4M20.5 21.5v4" stroke-width=".8"/></g><path d="M30.5 17.5 q0-4 5-7 q1.5 5-2.5 8.5z M29.5 19 l-1.5 4 3-2.5z" fill="#e0e0e0"/><text x="27" y="35.5" font-family="Liberation Sans" font-weight="bold" font-size="12.5" fill="#e6e6e6">D</text></svg>
<div class="b" style="left:1314px;top:74px;width:92px;height:20px;"></div>
<div class="t " style="left:1317px;top:75.67px;color:#d4d4d4;letter-spacing:-0.283px;">ReplayLast</div>
<div class="b" style="left:1410px;top:74px;width:92px;height:20px;"></div>
<div class="t " style="left:1413px;top:75.67px;color:#d4d4d4;letter-spacing:-0.358px;">ReplayLastRel</div>
<div class="t " style="left:1317px;top:97.67px;color:#d4d4d4;letter-spacing:-0.072px;">AdjustLast 1</div>
<div class="trk" style="left:1320px;top:115px;width:180px"></div><div class="thumb" style="left:1441px;top:112.5px;width:14px"></div>
<div class="t " style="left:1509px;top:75.67px;color:#d4d4d4;letter-spacing:-0.096px;">ActivePoints: 420,272</div>
<div class="t " style="left:1509px;top:99.67px;color:#d4d4d4;letter-spacing:-0.028px;">TotalPoints: 420,272</div>
<div style="left:117px;top:129px;width:1988px;height:8px;background:repeating-linear-gradient(90deg,#1d1d1d 0,#1d1d1d 22px,#242424 22px,#242424 24px)"></div>
<div style="left:2110px;top:128px;width:23px;height:8px;background:#f8952a"></div>
<div class="b" style="left:18px;top:126px;width:92px;height:92px;background:#393939;overflow:hidden"></div><div style="left:19px;top:201px;width:90px;height:16px;background:#2f2f2f;border-radius:0 0 3px 3px"></div><svg style="left:19px;top:127px" width="90" height="74" viewBox="19 127 90 74"><defs><radialGradient id="mv" cx="0.5" cy="0.35" r="0.7"><stop offset="0" stop-color="#d8d8d8"/><stop offset="0.5" stop-color="#a8a8a8"/><stop offset="1" stop-color="#5a5a5a"/></radialGradient><filter id="bl1"><feGaussianBlur stdDeviation="0.8"/></filter></defs>
<path d="M83 127 C93 130 98 145 95 165 C92 185 80 199 62 199 C42 199 28 185 28 168 C28 150 45 140 58 134 C68 129 76 125.5 83 127Z" fill="url(#mv)" filter="url(#bl1)"/><path d="M56 149 L72 141.5" stroke="#f4f4f4" stroke-width="2.2" stroke-linecap="round" filter="url(#bl1)"/></svg><div class="t" style="left:18px;width:92px;text-align:center;top:202.67px;color:#b8b8b8;letter-spacing:-0.109px;">Move</div>
<div class="b" style="left:18px;top:222px;width:92px;height:92px;background:#393939;overflow:hidden"></div><div style="left:19px;top:297px;width:90px;height:16px;background:#2f2f2f;border-radius:0 0 3px 3px"></div><svg style="left:19px;top:223px" width="90" height="74" viewBox="19 223 90 74"><circle cx="32" cy="235.5" r="5.6" fill="#fbfbfb" stroke="#2a2a2a" stroke-width="1"/><circle cx="32" cy="253" r="5.6" fill="#fbfbfb" stroke="#2a2a2a" stroke-width="1"/><circle cx="40.5" cy="268.5" r="5.6" fill="#fbfbfb" stroke="#2a2a2a" stroke-width="1"/><circle cx="55" cy="280.5" r="5.6" fill="#fbfbfb" stroke="#2a2a2a" stroke-width="1"/><circle cx="75.5" cy="281.5" r="5.6" fill="#fbfbfb" stroke="#2a2a2a" stroke-width="1"/><circle cx="94" cy="274.5" r="5.6" fill="#fbfbfb" stroke="#2a2a2a" stroke-width="1"/></svg><div class="t" style="left:18px;width:92px;text-align:center;top:298.67px;color:#b8b8b8;letter-spacing:-0.234px;">Dots</div>
<div class="b" style="left:18px;top:318px;width:92px;height:92px;background:#393939;overflow:hidden"></div><div style="left:19px;top:393px;width:90px;height:16px;background:#2f2f2f;border-radius:0 0 3px 3px"></div><div class="t" style="left:18px;width:92px;text-align:center;top:394.67px;color:#b8b8b8;letter-spacing:0.014px;">Alpha Off</div>
<div class="b" style="left:18px;top:414px;width:92px;height:92px;background:#393939;overflow:hidden"></div><div style="left:19px;top:489px;width:90px;height:16px;background:#2f2f2f;border-radius:0 0 3px 3px"></div><div class="t" style="left:18px;width:92px;text-align:center;top:490.67px;color:#b8b8b8;letter-spacing:0.158px;">Texture Off</div>
<div class="b" style="left:18px;top:510px;width:92px;height:92px;background:#393939;overflow:hidden"></div><div style="left:19px;top:585px;width:90px;height:16px;background:#2f2f2f;border-radius:0 0 3px 3px"></div><svg style="left:19px;top:511px" width="90" height="75" viewBox="19 511 90 75"><defs><radialGradient id="mat" cx="0.5" cy="0.36" r="0.62"><stop offset="0" stop-color="#d4d4d4"/><stop offset="0.45" stop-color="#9c9c9c"/><stop offset="0.85" stop-color="#555"/><stop offset="1" stop-color="#303030"/></radialGradient><linearGradient id="matbg" x1="0" y1="0" x2="0" y2="1"><stop offset="0" stop-color="#6a6a6a"/><stop offset="1" stop-color="#3a3a3a"/></linearGradient></defs><rect x="24" y="511" width="80" height="75" fill="url(#matbg)"/><circle cx="64" cy="549" r="39.5" fill="url(#mat)"/></svg><div class="t" style="left:18px;width:92px;text-align:center;top:586.67px;color:#b8b8b8;letter-spacing:0.195px;">StartupMaterial</div>
<div style="left:16px;top:604px;width:96px;height:96px;background:conic-gradient(from 315deg,#f00,#ff0 60deg,#0f0 120deg,#0ff 180deg,#00f 240deg,#f0f 300deg,#f00 360deg)"></div>
<div style="left:32px;top:620px;width:64px;height:64px;background:linear-gradient(to bottom,rgba(255,255,255,.88),rgba(255,255,255,0) 50%,rgba(0,0,0,0) 50%,#000),linear-gradient(to right,#808080,#f00)"></div>
<div style="left:19px;top:607px;width:10px;height:10px;background:#e00;border:1px solid #fff"></div>
<div style="left:32px;top:620px;width:6px;height:6px;background:#fff;border:1px solid #000"></div>
<div class="bd" style="left:18px;top:702px;width:92px;height:20px;"></div>
<div class="t " style="left:21px;top:703.67px;color:#c8c8c8;letter-spacing:0.114px;">Gradient</div>
<div class="b" style="left:17px;top:725px;width:46px;height:46px;background:#000;border-color:#1a1a1a;border-radius:5px"></div>
<div class="b" style="left:65px;top:725px;width:46px;height:46px;background:#f8f8f8;border-color:#1a1a1a;border-radius:5px"></div>
<div class="b" style="left:18px;top:774px;width:92px;height:20px;background:#333"></div>
<div class="t " style="left:21px;top:775.67px;color:#c8c8c8;letter-spacing:-0.169px;">SwitchColor</div>
<div class="bo" style="left:18px;top:798px;width:92px;height:20px;"></div>
<div class="t " style="left:21px;top:799.67px;color:#5a1d00;letter-spacing:0.152px;">Alternate</div>
<div style="left:4px;top:668px;width:6px;height:50px;background:conic-gradient(#5c5c5c 25%,#2a2a2a 0 50%,#5c5c5c 0 75%,#2a2a2a 0) 0 0/2px 2px"></div>
<div style="left:4px;top:745px;width:6px;height:54px;background:conic-gradient(#5c5c5c 25%,#2a2a2a 0 50%,#5c5c5c 0 75%,#2a2a2a 0) 0 0/2px 2px"></div>
<svg style="left:3px;top:720px" width="9" height="24"><path d="M1 1.5l6.5 5-6.5 5zM7.5 12v10l-6.5-5z" fill="#6a6a6a"/></svg>
<div class="t " style="left:2348px;top:26.67px;color:#e4e4e4;letter-spacing:-0.068px;">Subtool</div>
<div style="left:2334px;top:48px;width:201px;height:673px;background:#2d2d2d;border:1px solid #1a1a1a;border-radius:9px;box-shadow:inset 0 0 0 1px rgba(255,255,255,.03)"></div>
<div class="t " style="left:2348px;top:50.67px;color:#e4e4e4;letter-spacing:0.123px;">Geometry</div>
<div class="bx" style="left:2340px;top:70px;width:92px;height:20px;"></div><div class="t " style="left:2343px;top:71.67px;color:#5c5c5c;letter-spacing:-0.344px;">Lower Res</div>
<div class="b" style="left:2436px;top:70px;width:92px;height:20px;"></div><div class="t " style="left:2439px;top:71.67px;color:#d8d8d8;letter-spacing:-0.198px;">Higher Res</div>
<div class="bx" style="left:2340px;top:94px;width:92px;height:20px;"></div>
<div class="t " style="left:2343px;top:93.17px;color:#5c5c5c;letter-spacing:-0.469px;">SDiv</div>
<div style="left:2340px;top:108px;width:92px;height:5px;background:#a8742e;border-radius:2.5px"></div>
<div class="bx" style="left:2436px;top:94px;width:44px;height:20px;"></div><div class="t " style="left:2439px;top:95.67px;color:#5c5c5c;letter-spacing:-0.547px;">Cage</div>
<div class="bx" style="left:2484px;top:94px;width:44px;height:20px;"></div><div class="t " style="left:2487px;top:95.67px;color:#5c5c5c;letter-spacing:-0.391px;">Rstr</div>
<div class="bx" style="left:2340px;top:118px;width:92px;height:20px;"></div><div class="t " style="left:2343px;top:119.67px;color:#5c5c5c;letter-spacing:-0.16px;">Del Lower</div>
<div class="bx" style="left:2436px;top:118px;width:92px;height:20px;"></div><div class="t " style="left:2439px;top:119.67px;color:#5c5c5c;letter-spacing:-0.09px;">Del Higher</div>
<div class="bx" style="left:2340px;top:142px;width:188px;height:20px;"></div><div class="t " style="left:2343px;top:143.67px;color:#5c5c5c;letter-spacing:-0.167px;">Freeze SubDivision Levels</div>
<div class="b" style="left:2340px;top:166px;width:188px;height:20px;"></div><div class="t " style="left:2343px;top:167.67px;color:#d8d8d8;letter-spacing:-0.141px;">Reconstruct Subdiv</div>
<div class="bx" style="left:2340px;top:190px;width:188px;height:20px;"></div><div class="t " style="left:2343px;top:191.67px;color:#5c5c5c;letter-spacing:-0.294px;">Convert BPR To Geo</div>
<div class="b" style="left:2340px;top:214px;width:92px;height:44px;"></div><div class="t " style="left:2343px;top:227.67px;color:#d8d8d8;letter-spacing:-0.05px;">Divide</div>
<div class="bo" style="left:2436px;top:214px;width:92px;height:20px;"></div><div class="t " style="left:2439px;top:215.67px;color:#5a1d00;letter-spacing:-0.367px;">Smt</div>
<div class="bx" style="left:2436px;top:238px;width:44px;height:20px;"></div><div class="t " style="left:2439px;top:239.67px;color:#d8d8d8;letter-spacing:-0.773px;">Suv</div>
<div class="bx" style="left:2484px;top:238px;width:44px;height:20px;"></div><div class="t " style="left:2487px;top:239.67px;color:#5c5c5c;letter-spacing:-1.115px;">ReUV</div>
<div class="sep" style="top:261px"></div>
<div class="t " style="left:2344px;top:264.67px;color:#e0e0e0;letter-spacing:-0.102px;">Dynamic Subdiv</div>
<div class="sep" style="top:285px"></div>
<div class="t " style="left:2344px;top:288.67px;color:#e0e0e0;letter-spacing:-0.359px;">EdgeLoop</div>
<div class="sep" style="top:309px"></div>
<div class="t " style="left:2344px;top:312.67px;color:#e0e0e0;letter-spacing:-0.109px;">Crease</div>
<div class="sep" style="top:333px"></div>
<div class="t " style="left:2344px;top:336.67px;color:#e0e0e0;letter-spacing:-0.246px;">ShadowBox</div>
<div class="sep" style="top:357px"></div>
<div class="t " style="left:2344px;top:360.67px;color:#e0e0e0;letter-spacing:-0.285px;">ClayPolish</div>
<div class="sep" style="top:381px"></div>
<div class="t " style="left:2344px;top:384.67px;color:#e0e0e0;letter-spacing:0px;">DynaMesh</div>
<div style="left:2336px;top:390px;width:5px;height:5px;border-radius:3px;background:#c88a30"></div>
<div class="bo" style="left:2340px;top:406px;width:92px;height:44px;"></div><div class="t " style="left:2343px;top:419.67px;color:#7a2400;letter-spacing:0px;">DynaMesh</div>
<div class="bx" style="left:2436px;top:406px;width:44px;height:20px;"></div><div class="t " style="left:2439px;top:407.67px;color:#cfcfcf;letter-spacing:-0.15px;">Groups</div>
<div class="bx" style="left:2484px;top:406px;width:44px;height:20px;"></div><div class="t " style="left:2487px;top:407.67px;color:#cfcfcf;letter-spacing:-0.309px;">Polish</div>
<div class="bx" style="left:2436px;top:430px;width:44px;height:20px;"></div>
<div class="t " style="left:2439px;top:429.67px;color:#d8d8d8;letter-spacing:0.019px;">Blur 2</div>
<div class="trk" style="left:2438px;top:447px;width:41px"></div><div class="thumb" style="left:2436px;top:444.5px;width:14px"></div>
<div style="left:2470px;top:432px;width:6px;height:6px;border-radius:3px;background:radial-gradient(#fff,#888)"></div>
<div class="bx" style="left:2484px;top:430px;width:44px;height:20px;"></div><div class="t " style="left:2487px;top:431.67px;color:#cfcfcf;letter-spacing:0.057px;">Project</div>
<div class="t " style="left:2343px;top:453.67px;color:#d8d8d8;letter-spacing:-0.07px;">Resolution 216</div>
<div class="trk" style="left:2343px;top:471px;width:184px"></div><div class="thumb" style="left:2379px;top:468.5px;width:14px"></div>
<div style="left:2518px;top:456px;width:7px;height:7px;border-radius:4px;background:radial-gradient(#fff,#777)"></div>
<div class="t " style="left:2343px;top:477.67px;color:#d8d8d8;letter-spacing:-0.059px;">SubProjection 0.6</div>
<div class="trk" style="left:2343px;top:495px;width:184px"></div><div class="thumb" style="left:2444px;top:492.5px;width:14px"></div>
<div class="b" style="left:2340px;top:502px;width:92px;height:20px;"></div><div class="t " style="left:2343px;top:503.67px;color:#d8d8d8;letter-spacing:-0.375px;">Add</div>
<div class="b" style="left:2436px;top:502px;width:44px;height:20px;"></div><div class="t " style="left:2439px;top:503.67px;color:#d8d8d8;letter-spacing:-1px;">Sub</div>
<div class="b" style="left:2484px;top:502px;width:44px;height:20px;"></div><div class="t " style="left:2487px;top:503.67px;color:#d8d8d8;letter-spacing:-0.5px;">And</div>
<div class="b" style="left:2340px;top:526px;width:92px;height:20px;"></div><div class="t " style="left:2343px;top:527.67px;color:#d8d8d8;letter-spacing:-0.118px;">Create Shell</div>
<div class="t " style="left:2439px;top:525.67px;color:#d8d8d8;letter-spacing:-0.095px;">Thickness 4</div>
<div class="trk" style="left:2438px;top:543px;width:89px"></div><div class="thumb" style="left:2463px;top:540.5px;width:14px"></div>
<div class="sep" style="top:549px"></div>
<div class="t " style="left:2344px;top:552.67px;color:#e0e0e0;letter-spacing:0.121px;">Tessimate</div>
<div class="sep" style="top:573px"></div>
<div class="t " style="left:2344px;top:576.67px;color:#e0e0e0;letter-spacing:-0.225px;">ZRemesher</div>
<div class="sep" style="top:597px"></div>
<div class="t " style="left:2344px;top:600.67px;color:#e0e0e0;letter-spacing:0.099px;">Modify Topology</div>
<div class="sep" style="top:621px"></div>
<div class="t " style="left:2344px;top:624.67px;color:#e0e0e0;letter-spacing:-0.141px;">Position</div>
<div class="sep" style="top:645px"></div>
<div class="t " style="left:2344px;top:648.67px;color:#e0e0e0;letter-spacing:-0.693px;">Size</div>
<div class="sep" style="top:669px"></div>
<div class="t " style="left:2344px;top:672.67px;color:#e0e0e0;letter-spacing:-0.069px;">Stager</div>
<div class="sep" style="top:693px"></div>
<div class="t " style="left:2344px;top:696.67px;color:#e0e0e0;letter-spacing:0.227px;">MeshIntegrity</div>
<div class="t " style="left:2348px;top:731.67px;color:#e4e4e4;letter-spacing:0.195px;">ArrayMesh</div>
<div class="t " style="left:2348px;top:755.67px;color:#e4e4e4;letter-spacing:0.042px;">NanoMesh</div>
<div class="t " style="left:2348px;top:779.67px;color:#e4e4e4;letter-spacing:-0.351px;">Thick Skin</div>
<div class="t " style="left:2348px;top:803.67px;color:#e4e4e4;letter-spacing:-0.206px;">Layers</div>
<div class="t " style="left:2348px;top:827.67px;color:#e4e4e4;letter-spacing:-0.037px;">FiberMesh</div>
<div class="t " style="left:2348px;top:851.67px;color:#e4e4e4;letter-spacing:0.009px;">Geometry HD</div>
<div class="t " style="left:2348px;top:875.67px;color:#e4e4e4;letter-spacing:-0.12px;">Preview</div>
<div class="t " style="left:2348px;top:899.67px;color:#e4e4e4;letter-spacing:-0.099px;">Surface</div>
<div class="t " style="left:2348px;top:923.67px;color:#e4e4e4;letter-spacing:0.241px;">Deformation</div>
<div class="t " style="left:2348px;top:947.67px;color:#e4e4e4;letter-spacing:-0.008px;">Masking</div>
<div class="t " style="left:2348px;top:971.67px;color:#e4e4e4;letter-spacing:0.009px;">Visibility</div>
<div class="t " style="left:2348px;top:995.67px;color:#e4e4e4;letter-spacing:-0.116px;">Polygroups</div>
<div class="t " style="left:2348px;top:1019.67px;color:#e4e4e4;letter-spacing:-0.057px;">Contact</div>
<div class="t " style="left:2348px;top:1043.67px;color:#e4e4e4;letter-spacing:0.325px;">Morph Target</div>
<div class="t " style="left:2348px;top:1067.67px;color:#e4e4e4;letter-spacing:-0.055px;">Polypaint</div>
<div class="t " style="left:2348px;top:1091.67px;color:#e4e4e4;letter-spacing:-0.281px;">UV Map</div>
<div class="t " style="left:2348px;top:1115.67px;color:#e4e4e4;letter-spacing:0.197px;">Texture Map</div>
<div class="t " style="left:2348px;top:1139.67px;color:#e4e4e4;letter-spacing:0.082px;">Displacement Map</div>
<div class="t " style="left:2348px;top:1163.67px;color:#e4e4e4;letter-spacing:0.186px;">Normal Map</div>
<div class="t " style="left:2348px;top:1187.67px;color:#e4e4e4;letter-spacing:0.06px;">Vector Displacement Map</div>
<div class="t " style="left:2348px;top:1211.67px;color:#e4e4e4;letter-spacing:0.004px;">Display Properties</div>
<div class="t " style="left:2348px;top:1235.67px;color:#e4e4e4;letter-spacing:-0.109px;">Unified Skin</div>
<div class="t " style="left:2348px;top:1259.67px;color:#e4e4e4;letter-spacing:0.148px;">Initialize</div>
<div class="t " style="left:2348px;top:1283.67px;color:#e4e4e4;letter-spacing:0.463px;">Import</div>
<div class="t " style="left:2348px;top:1307.67px;color:#e4e4e4;letter-spacing:-0.028px;">Export</div>
<div class="b" style="left:2248px;top:128px;width:44px;height:44px;"></div>
<div class="t " style="left:2251px;top:175.67px;color:#e0e0e0;letter-spacing:-0.428px;">SPix 3</div>
<div class="trk" style="left:2249px;top:192.5px;width:43px"></div><div class="thumb" style="left:2260px;top:190px;width:14px"></div>
<div class="b" style="left:2248px;top:200px;width:44px;height:44px;"></div><div class="t" style="left:2246px;width:48px;text-align:center;top:223.49px;color:#dedede;font-size:8.4px;transform:scaleX(1.13);">Scroll</div>
<div class="b" style="left:2248px;top:248px;width:44px;height:44px;"></div><div class="t" style="left:2246px;width:48px;text-align:center;top:271.49px;color:#dedede;font-size:8.4px;transform:scaleX(1.13);">Zoom</div>
<div class="b" style="left:2248px;top:296px;width:44px;height:44px;"></div><div class="t" style="left:2246px;width:48px;text-align:center;top:319.49px;color:#dedede;font-size:8.4px;transform:scaleX(1.13);">Actual</div>
<div class="b" style="left:2248px;top:344px;width:44px;height:44px;"></div><div class="t" style="left:2246px;width:48px;text-align:center;top:367.49px;color:#dedede;font-size:8.4px;transform:scaleX(1.13);">AAHalf</div>
<div class="bo" style="left:2248px;top:392px;width:44px;height:44px;"></div><div class="t" style="left:2246px;width:48px;text-align:center;top:414.39px;color:#5a1d00;font-size:8.4px;transform:scaleX(1.13);">Persp</div>
<div class="bd" style="left:2248px;top:440px;width:44px;height:44px;background:#2b2b2b;border-color:#262626"></div>
<div class="t" style="left:2246px;width:48px;text-align:center;top:464.09px;color:#dedede;font-size:8.4px;transform:scaleX(1.13);">Floor</div>
<div class="bo" style="left:2248px;top:488px;width:44px;height:44px;"></div><div class="t" style="left:2246px;width:48px;text-align:center;top:511.69px;color:#5a1d00;font-size:8.4px;transform:scaleX(1.13);">L.Sym</div>
<div class="bd" style="left:2248px;top:536px;width:44px;height:44px;background:#2b2b2b;border-color:#262626"></div>
<div class="bo" style="left:2248px;top:584px;width:44px;height:20px;"></div>
<div class="b" style="left:2248px;top:656px;width:44px;height:44px;"></div><div class="t" style="left:2246px;width:48px;text-align:center;top:679.49px;color:#dedede;font-size:8.4px;transform:scaleX(1.13);">Frame</div>
<div class="b" style="left:2248px;top:704px;width:44px;height:44px;"></div><div class="t" style="left:2246px;width:48px;text-align:center;top:727.49px;color:#dedede;font-size:8.4px;transform:scaleX(1.13);">Move</div>
<div class="b" style="left:2248px;top:752px;width:44px;height:44px;"></div><div class="t" style="left:2246px;width:48px;text-align:center;top:775.49px;color:#dedede;font-size:8.4px;transform:scaleX(1.13);">Zoom3D</div>
<div class="b" style="left:2248px;top:800px;width:44px;height:44px;"></div><div class="t" style="left:2246px;width:48px;text-align:center;top:823.49px;color:#dedede;font-size:8.4px;transform:scaleX(1.13);">Rotate</div>
<div class="bd" style="left:2248px;top:848px;width:44px;height:44px;background:#2b2b2b;border-color:#262626"></div>
<div class="t" style="left:2246px;width:48px;text-align:center;top:871.59px;color:#dedede;font-size:8.4px;transform:scaleX(1.13);">PolyF</div>
<div class="bd" style="left:2248px;top:896px;width:44px;height:44px;background:#2b2b2b;border-color:#262626"></div>
<div class="t" style="left:2246px;width:48px;text-align:center;top:919.69px;color:#dedede;font-size:8.4px;transform:scaleX(1.13);">Transp</div>
<div class="bg" style="left:2248px;top:944px;width:44px;height:44px;"></div><div class="t" style="left:2246px;width:48px;text-align:center;top:968.49px;color:#6e400e;font-size:8.4px;transform:scaleX(1.13);">Ghost</div>
<div class="bd" style="left:2248px;top:992px;width:44px;height:44px;background:#2b2b2b;border-color:#262626"></div>
<div class="t" style="left:2246px;width:48px;text-align:center;top:1018.09px;color:#c8c8c8;font-size:8.4px;transform:scaleX(1.13);">Solo</div>
<div class="b" style="left:2248px;top:1040px;width:44px;height:44px;"></div><div class="t" style="left:2246px;width:48px;text-align:center;top:1063.59px;color:#b0b0b0;font-size:8.4px;transform:scaleX(1.13);">Xpose</div>
<div style="left:2249px;top:391px;width:42px;height:14px;overflow:hidden"><div class="t" style="left:4.7px;top:-2.2px;color:#fff4e0;font-size:7.8px;font-weight:bold;transform-origin:0 50%;transform:scaleX(1.2609);">Dynamic</div></div>
<div class="t" style="left:2250px;top:844.83px;color:#d0d0d0;font-size:8px;font-weight:bold;transform-origin:0 50%;transform:scaleX(1.2568);">Line Fill</div>
<div class="t" style="left:2253.7px;top:987.93px;color:#707070;font-size:8px;font-weight:bold;transform-origin:0 50%;transform:scaleX(1.0881);">Dynamic</div>
<div style="left:2300px;top:668px;width:6px;height:50px;background:conic-gradient(#5c5c5c 25%,#2a2a2a 0 50%,#5c5c5c 0 75%,#2a2a2a 0) 0 0/2px 2px"></div>
<div style="left:2300px;top:745px;width:6px;height:50px;background:conic-gradient(#5c5c5c 25%,#2a2a2a 0 50%,#5c5c5c 0 75%,#2a2a2a 0) 0 0/2px 2px"></div>
<svg style="left:2299px;top:720px" width="9" height="24"><path d="M1 1.5l6.5 5-6.5 5zM7.5 12v10l-6.5-5z" fill="#6a6a6a"/></svg>
<svg style="left:2244px;top:124px" width="52" height="964" viewBox="2244 124 52 964">
<defs>
<radialGradient id="ball" cx=".4" cy=".35" r=".7"><stop offset="0" stop-color="#d0d0d0"/><stop offset=".5" stop-color="#8a8a8a"/><stop offset="1" stop-color="#3c3c3c"/></radialGradient>
<g id="hand" fill="#e6e6e6"><path d="M2.5 14 L-1.5 8.5 Q-2.2 6.8 -0.5 6.8 L1.8 8.5 L1 2.5 Q1.2 1 2.4 2.2 L3.8 6 L4 0.8 Q4.8 -0.5 5.6 0.8 L6.2 6 L7.3 1.5 Q8.2 0.5 8.8 1.8 L8.6 6.8 L10 3.8 Q11 3 11.4 4.3 L10.3 10 L9.5 14Z"/></g>
<g id="mag" fill="none" stroke="#e2e2e2"><circle cx="0" cy="0" r="5.2" stroke-width="1.2" fill="#606060"/><path d="M-3.8 4 L-11 10.5" stroke-width="2.2"/><path d="M-2.5 -2.5 l2 2" stroke="#888" stroke-width=".8"/></g>
</defs>
<!-- BPR -->
<rect x="2255" y="135" width="30" height="29" fill="#6a6a6a"/><rect x="2255" y="135" width="30" height="29" fill="url(#bprg)"/>
<linearGradient id="bprg" x1="0" y1="0" x2="1" y2="1"><stop offset="0" stop-color="#5a5a5a"/><stop offset="1" stop-color="#3e3e3e"/></linearGradient>
<circle cx="2267" cy="147.5" r="12" fill="url(#ball)"/>
<text x="2260" y="164" font-family="Liberation Sans" font-weight="bold" font-size="9.5" fill="#e0e0e0" textLength="18.5" lengthAdjust="spacingAndGlyphs">BPR</text>
<!-- Scroll -->
<rect x="2270.5" y="209.5" width="12.5" height="13" fill="#6c6c6c" stroke="#bdbdbd" stroke-width="1"/><path d="M2276.7 211.5v9M2272.5 216h8.5M2276.7 211l-1.5 2h3zM2276.7 221l-1.5-2h3zM2272 216l2-1.5v3zM2281.5 216l-2-1.5v3z" stroke="#d8d8d8" stroke-width=".8" fill="#d8d8d8"/>
<use href="#hand" x="2259" y="210"/>
<!-- Zoom -->
<rect x="2267.5" y="258.5" width="15.5" height="12.5" fill="#6c6c6c" stroke="#bdbdbd" stroke-width="1"/><path d="M2278.5 260.5v8.5M2278.5 260l-2.2 2.8h4.4zM2278.5 269.5l-2.2-2.8h4.4z" stroke="#e0e0e0" stroke-width="1" fill="#e0e0e0"/>
<use href="#mag" x="2267.7" y="262.5"/>
<!-- Actual -->
<rect x="2268.5" y="306.5" width="14.5" height="12.5" fill="#6c6c6c" stroke="#bdbdbd" stroke-width="1"/><path d="M2273 312.5l4 4.5M2277 312.5l-4 4.5M2279.5 312l1.5-1.2v6.5" stroke="#e4e4e4" stroke-width="1" fill="none"/>
<use href="#mag" x="2267.7" y="310.5"/>
<!-- AAHalf -->
<rect x="2268.5" y="354.5" width="14.5" height="12.5" fill="#5c5c5c" stroke="#bdbdbd" stroke-width="1"/><rect x="2275" y="355" width="8" height="6.5" fill="#c4c4c4"/>
<use href="#mag" x="2267.7" y="358.5"/>
<!-- Persp -->
<g stroke="#5a1206" stroke-width="1.1" fill="none"><path d="M2255 402.5h29.5M2255 405h29.5"/><path d="M2262 405.5 L2277.5 405.5 L2284.5 415.5 L2255 415.5Z" fill="#c9772a"/><path d="M2258.5 408.5h22M2256.5 411.5h26.5M2269.8 405.5v10M2255 415.5h29.5"/></g>
<!-- small icons below persp -->
<path d="M2275.5 441.5h4.5M2277.7 441.5v4" stroke="#e8e8e8" stroke-width="1.6"/><path d="M2266 441h4M2284 441h4M2266 444h3M2284 444h3" stroke="#5a5048" stroke-width="1"/>
<!-- Floor -->
<path d="M2255 463.5h29.5" stroke="#e0e0e0" stroke-width="1.8"/><path d="M2268.3 454.5h3.5v3.8h2.7l-4.5 4-4.5-4h2.8z" fill="#e6e6e6"/>
<!-- L.Sym -->
<g stroke="#5a1206" fill="#5a1206"><path d="M2255 512.3h29.5" stroke-width="1.1"/><path d="M2258 507.5l4-3v2h3.5v2h-3.5v2zM2281.5 507.5l-4-3v2h-3.5v2h3.5v2z" stroke="none"/><path d="M2269.5 505v2M2269.5 508.5v2" stroke-width="1"/><rect x="2268" y="511" width="3" height="3" fill="#f8b060" stroke-width=".9"/></g>
<!-- Camera lock -->
<g fill="#8c8c8c"><rect x="2261.5" y="562" width="15" height="8.5" rx="1.5"/><path d="M2257.5 562.5l4 1.5v5l-4 1.5z"/><circle cx="2265.5" cy="558" r="3.8" fill="none" stroke="#8c8c8c" stroke-width="1.6"/><circle cx="2273" cy="559.5" r="2.5"/><rect x="2263" y="570" width="11" height="2" rx="1"/></g>
<rect x="2270" y="552.5" width="12" height="9.5" rx="1.2" fill="#dadada"/><path d="M2272.5 553v-2.5a3.5 3.5 0 0 1 7 0v2.5" fill="none" stroke="#e4e4e4" stroke-width="1.7"/><rect x="2275" y="556" width="4" height="3.5" fill="#9a9a9a"/>
<!-- XYZ -->
<g fill="none" stroke="#5a1206" stroke-width="1.2"><path d="M2260.5 596a4 4 0 1 1 6.5 -4.5"/><path d="M2259 594.5l2.5 3.5 2-3.5z" fill="#5a1206" stroke="none"/></g>
<text x="2263.5" y="599" font-family="Liberation Sans" font-weight="bold" font-size="9" fill="#5a1206" textLength="17" lengthAdjust="spacingAndGlyphs">XYZ</text>
<g fill="none" stroke="#dcdcdc" stroke-width="1.2"><path d="M2266.5 620a4 4 0 1 1 6 -5"/><path d="M2272 642.5a4 4 0 1 1 6 -5"/></g>
<path d="M2264.8 618.5l2.8 3.2 1.5-3.6zM2270.3 641l2.8 3.2 1.5-3.6z" fill="#dcdcdc"/>
<text x="2271" y="623.5" font-family="Liberation Sans" font-weight="bold" font-size="7.5" fill="#dcdcdc">Y</text><text x="2276.8" y="646" font-family="Liberation Sans" font-weight="bold" font-size="7.5" fill="#dcdcdc">Z</text>
<!-- Frame -->
<circle cx="2270" cy="673" r="3.8" fill="url(#ball)"/>
<g stroke="#e4e4e4" stroke-width="1.1" fill="none"><path d="M2265 668.5l-4.5-4.5M2260.5 667.5v-3.5h3.5M2275 668.5l4.5-4.5M2276 664h3.5v3.5M2265 677l-4.5 4M2260.5 677.5v3.5h3.5M2275 677l4.5 4M2276 681h3.5v-3.5"/></g>
<!-- Move -->
<circle cx="2274" cy="721.5" r="6.5" fill="url(#ball)"/><rect x="2272.5" y="718.5" width="4" height="4" fill="#555" stroke="#ddd" stroke-width=".9"/>
<use href="#hand" x="2257.5" y="716.5"/>
<!-- Zoom3D -->
<circle cx="2276.5" cy="768" r="7" fill="url(#ball)"/><rect x="2274" y="765" width="4" height="4" fill="#555" stroke="#ddd" stroke-width=".9"/>
<use href="#mag" x="2267.5" y="767.5"/>
<!-- Rotate -->
<circle cx="2269" cy="822" r="8" fill="url(#ball)" opacity=".75"/><rect x="2267.5" y="819.5" width="4" height="4" fill="#555" stroke="#ddd" stroke-width=".9"/>
<g fill="none" stroke="#e4e4e4" stroke-width="1.7"><path d="M2262.5 816.5q1-9 8.5-8.5q4 .5 5 4.5"/><path d="M2279.5 815.5q5 3 3 8q-1.5 3-6 3.5"/></g><path d="M2273 812l5.5 1.5-3.5 3.5zM2277 818.5l1-5 3.5 3.5z" fill="#e4e4e4"/>
<!-- PolyF -->
<g fill="none" stroke="#e8e8e8" stroke-width="1"><rect x="2258.5" y="858.5" width="24.5" height="16"/><path d="M2270.7 858.5v16M2258.5 866.5h24.5"/><path d="M2264.5 858.5v16M2277 858.5v16M2258.5 862.5h24.5M2258.5 870.5h24.5" stroke="#7a7a7a" stroke-width=".6"/></g>
<!-- Transp -->
<ellipse cx="2267" cy="915" rx="6.5" ry="5.5" fill="url(#ball)" opacity=".8"/><rect x="2266.5" y="905.5" width="14.5" height="12.5" fill="#4a4a4a" fill-opacity=".6" stroke="#8a8a8a" stroke-width="1"/>
<!-- Ghost -->
<path d="M2276 956l-6 5-6 .5 4 3-3 6 5-4.5 6-1-4-3z" fill="#6a3a0a" opacity=".7"/>
<!-- Solo -->
<circle cx="2260.8" cy="1013.5" r="4.2" fill="#5c5c5c"/><circle cx="2277.5" cy="1013.5" r="4.2" fill="#575757"/><circle cx="2270.2" cy="1010.3" r="6" fill="#d4d4d4"/>
<!-- Xpose -->
<g stroke="#d0d0d0" stroke-width="1.1" fill="none"><path d="M2257 1058h5.5M2277.5 1058h5.5M2265 1052.5l-4-4M2275.5 1052.5l4-4M2265 1063.5l-4 4M2275.5 1063.5l4 4"/><path d="M2260.5 1051.5v-3.5h3.5M2276 1048h3.5v3.5M2260.5 1064.5v3.5h3.5M2276 1068h3.5v-3.5"/></g>
<path d="M2256 1058l3.5-2.8v5.6zM2284.5 1058l-3.5-2.8v5.6z" fill="#e0e0e0"/><circle cx="2270.2" cy="1058" r="1.2" fill="#eee"/>
</svg>
</div>
<svg style="left:140px;top:645px" width="42" height="442" viewBox="140 645 42 442">
<circle cx="160" cy="664.5" r="17" fill="#000"/>
<path d="M155.8 652.6 L164.5 652.6 L170.4 663.3 L163.6 677.5 L156.7 677.5 L150 663.3Z" fill="#fff"/><path d="M160.1 663v15" stroke="#000" stroke-width="2.3"/><circle cx="160.1" cy="662.6" r="3.4" fill="#000"/>
<rect x="143.5" y="689.5" width="33.5" height="394" fill="#fff" stroke="#d8d8d8" stroke-width="1"/>
<rect x="144.6" y="690.6" width="30.6" height="60.3" fill="#29a8e8"/>
<path d="M148.5 705.3 Q160 692.5 172 705.3 Q160 718 148.5 705.3Z" fill="#fff" stroke="#0c1c3c" stroke-width="1.3"/><circle cx="160.2" cy="705.3" r="5" fill="#1c2030" stroke="#e8b090" stroke-width="1"/>
<path d="M150.3 725.8 L171.5 732.2 L163.3 736 L170.3 744 L166.3 747 L159.5 738.8 L155.8 744.8Z" fill="#fff" stroke="#0c1c3c" stroke-width="1.4" stroke-linejoin="round"/>
<g fill="#f2f2f2" stroke="#1a1a1a" stroke-width="1.5" stroke-linejoin="round"><path d="M153.5 756.5 L158.5 757.5 L171 770.5 L164.5 777.5 L151.5 765 L150 761Z" fill="#fff"/><path d="M156.5 762.5 l4 -4 7.5 7.5 -4 4z" fill="#c8c8c8"/><path d="M168 767 L161 774" fill="none"/><path d="M148.5 757 L153.5 756.5 L150 761Z" fill="#111"/>
<rect x="151.5" y="787.5" width="17" height="17"/><rect x="154" y="790" width="12" height="12" fill="#fff"/>
<path d="M150 820 L158 814 L172 828 L165 835 L150 824Z"/><path d="M153 818l4.5 4.5" fill="none"/>
<path d="M149.5 884.5 L158.5 876.5 V881 H164 A6.5 6.5 0 0 1 164 894 H158 V890.3 H164 A2.8 2.8 0 0 0 164 884.7 H158.5 V892Z" fill="#fff"/>
<path d="M152.5 907 H167.5 V910 H166 V922 H154 V910 H152.5Z M156.5 905 H163.5 V907" fill="#fff"/><path d="M157 910V921M163 910V921" fill="none"/>
<rect x="151" y="938" width="18" height="12" rx="1"/><rect x="154" y="940.5" width="12" height="7" fill="#bbb"/><path d="M156 950l-2 5M164 950l2 5M157 935h6v3h-6z" fill="#fff"/>
<rect x="150.5" y="969" width="19" height="14" rx="1.5" fill="#fff"/><rect x="156" y="966" width="6" height="3" fill="#fff"/><circle cx="158.5" cy="976" r="4.2" fill="#777"/><circle cx="166" cy="972.5" r="1" fill="#222"/>
<rect x="152.5" y="998" width="15" height="17" rx="1" fill="#fff"/><rect x="156.5" y="995.5" width="7" height="4" fill="#fff"/><path d="M155 1003h10M155 1006.5h10M155 1010h10" fill="none" stroke-width="1"/></g>
<circle cx="160" cy="856" r="4.2" fill="#222"/>
<path d="M176 771v5h-5zM176 806v5h-5zM176 955v5h-5z" fill="#333"/>
<rect x="145" y="1021" width="15" height="15" fill="#18a0f0"/><rect x="160" y="1021" width="15" height="15" fill="#ffe400"/><rect x="145" y="1036" width="15" height="15" fill="#e8307a"/><rect x="160" y="1036" width="15" height="15" fill="#000"/><rect x="145" y="1051" width="30" height="30" fill="#10d820"/>
</svg>
</body></html>
